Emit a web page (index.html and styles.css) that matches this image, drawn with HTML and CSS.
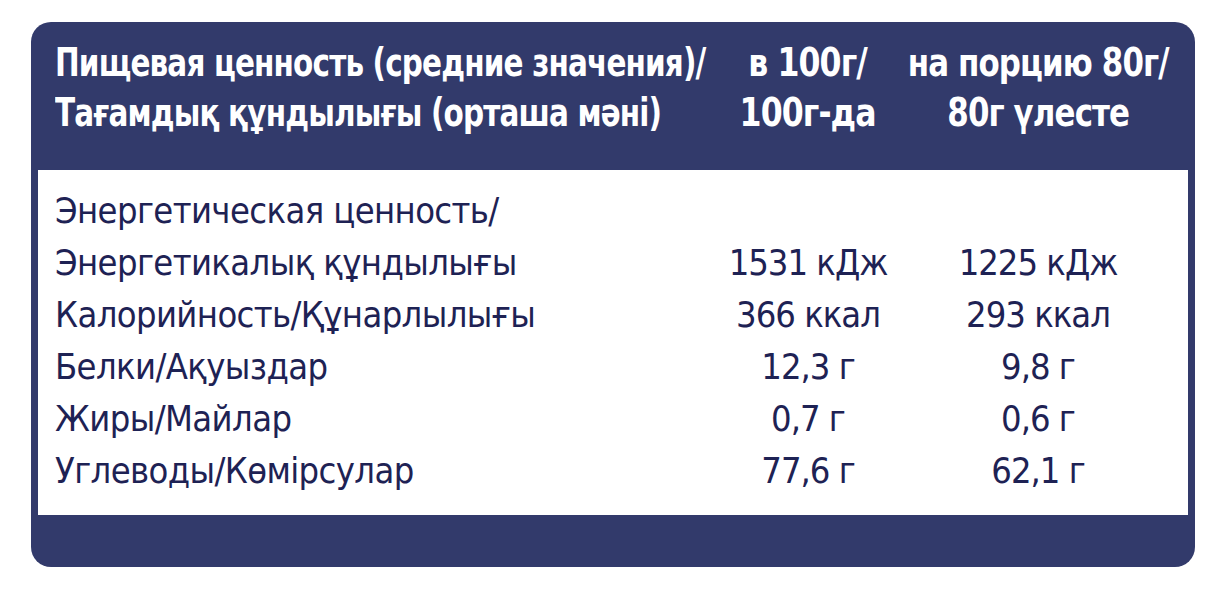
FILE: index.html
```html
<!DOCTYPE html>
<html lang="ru">
<head>
<meta charset="utf-8">
<link rel="stylesheet" href="styles.css">
</head>
<body>
<div class="card">
  <div class="head grid">
    <div class="c1"><span class="sq">Пищевая ценность (средние значения)/<br>Тағамдық құндылығы (орташа мәні)</span></div>
    <div class="c2"><span class="sq">в 100г/<br>100г-да</span></div>
    <div class="c3"><span class="sq">на порцию 80г/<br>80г үлесте</span></div>
  </div>
  <div class="panel">
    <div class="grid row">
      <div class="c1">Энергетическая ценность/<br>Энергетикалық құндылығы</div>
      <div class="c2">1531 кДж</div>
      <div class="c3">1225 кДж</div>
    </div>
    <div class="grid row">
      <div class="c1">Калорийность/Құнарлылығы</div>
      <div class="c2">366 ккал</div>
      <div class="c3">293 ккал</div>
    </div>
    <div class="grid row">
      <div class="c1">Белки/Ақуыздар</div>
      <div class="c2">12,3 г</div>
      <div class="c3">9,8 г</div>
    </div>
    <div class="grid row">
      <div class="c1">Жиры/Майлар</div>
      <div class="c2">0,7 г</div>
      <div class="c3">0,6 г</div>
    </div>
    <div class="grid row">
      <div class="c1">Углеводы/Көмірсулар</div>
      <div class="c2">77,6 г</div>
      <div class="c3">62,1 г</div>
    </div>
  </div>
  <div class="foot"></div>
</div>
</body>
</html>
```
FILE: styles.css
```css
html, body {
  margin: 0;
  padding: 0;
  background: #ffffff;
}
body {
  padding: 22px 0 0 31px;
  font-family: "DejaVu Sans Condensed", "DejaVu Sans", sans-serif;
  font-stretch: condensed;
}
.card {
  width: 1164px;
  height: 545px;
  background: #323a6b;
  border-radius: 20px;
  box-sizing: border-box;
  padding: 0 7px;
  display: flex;
  flex-direction: column;
}
.grid {
  display: grid;
  grid-template-columns: 645px 216px 244px;
  align-items: end;
}
.c1, .c2, .c3 {
  white-space: nowrap;
}
.c2, .c3 {
  text-align: center;
}
.head {
  color: #ffffff;
  font-weight: bold;
  font-size: 39px;
  line-height: 50px;
  padding: 16px 0 32px 17px;
  height: 148px;
  box-sizing: border-box;
  letter-spacing: -1px;
}
.sq {
  display: inline-block;
  transform: scaleX(0.84);
}
.head .c1 .sq {
  transform-origin: left center;
}
.head .c2, .head .c3 {
  display: flex;
  justify-content: center;
}
.head .c2 .sq {
  transform: scaleX(0.9);
  transform-origin: center center;
}
.head .c3 .sq {
  transform: scaleX(0.88);
  transform-origin: center center;
}
.panel {
  background: #ffffff;
  height: 345px;
  box-sizing: border-box;
  padding: 15px 0 0 17px;
  color: #1e2254;
  font-size: 36px;
  line-height: 52px;
  letter-spacing: -0.6px;
}
.row .c2, .row .c3 {
  letter-spacing: -1px;
}
.foot {
  flex: 1;
}
```
